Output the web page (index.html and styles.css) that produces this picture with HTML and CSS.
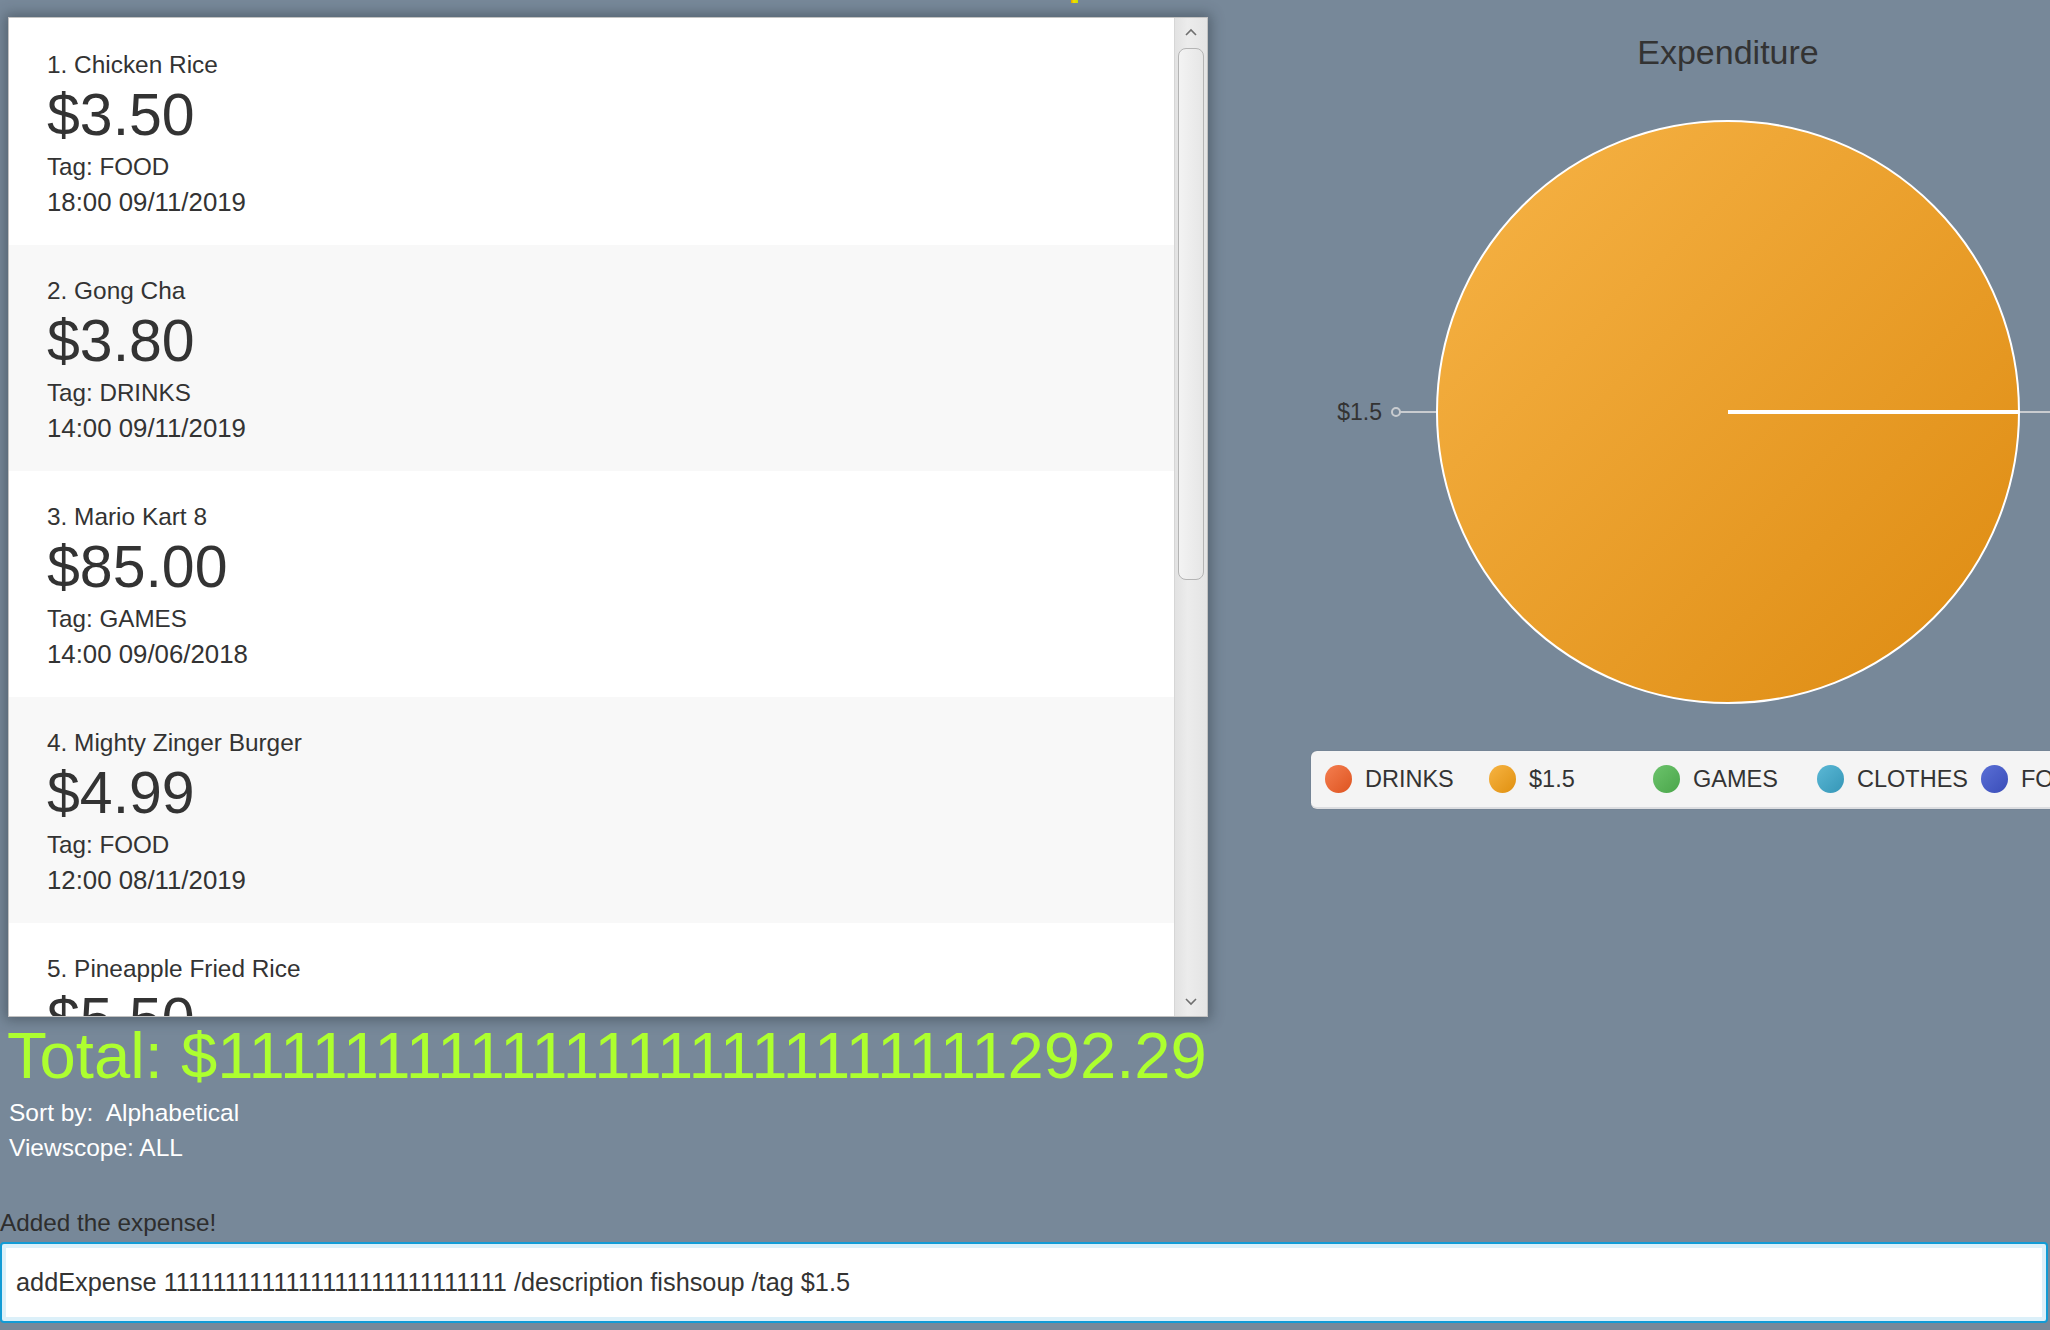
FILE: index.html
```html
<!DOCTYPE html>
<html lang="en">
<head>
<meta charset="utf-8">
<title>Expense Tracker</title>
<link rel="stylesheet" href="styles.css">
</head>
<body>
<div class="app">
  <div class="main">
    <div class="left">
      <div class="top-strip"><span class="cut-mark"></span></div>
      <div class="panel">
        <div class="list">
          <div class="card">
            <div class="c-title">1. Chicken Rice</div>
            <div class="c-amount">$3.50</div>
            <div class="c-tag">Tag: FOOD</div>
            <div class="c-date">18:00 09/11/2019</div>
          </div>
          <div class="card alt">
            <div class="c-title">2. Gong Cha</div>
            <div class="c-amount">$3.80</div>
            <div class="c-tag">Tag: DRINKS</div>
            <div class="c-date">14:00 09/11/2019</div>
          </div>
          <div class="card">
            <div class="c-title">3. Mario Kart 8</div>
            <div class="c-amount">$85.00</div>
            <div class="c-tag">Tag: GAMES</div>
            <div class="c-date">14:00 09/06/2018</div>
          </div>
          <div class="card alt">
            <div class="c-title">4. Mighty Zinger Burger</div>
            <div class="c-amount">$4.99</div>
            <div class="c-tag">Tag: FOOD</div>
            <div class="c-date">12:00 08/11/2019</div>
          </div>
          <div class="card">
            <div class="c-title">5. Pineapple Fried Rice</div>
            <div class="c-amount">$5.50</div>
          </div>
        </div>
        <div class="scrollbar">
          <div class="sb-btn">
            <svg width="12" height="8" viewBox="0 0 12 8"><polyline points="1,7 6,2 11,7" fill="none" stroke="#6f6f6f" stroke-width="1.6"/></svg>
          </div>
          <div class="sb-track"><div class="sb-thumb"></div></div>
          <div class="sb-btn">
            <svg width="12" height="8" viewBox="0 0 12 8"><polyline points="1,1 6,6 11,1" fill="none" stroke="#6f6f6f" stroke-width="1.6"/></svg>
          </div>
        </div>
      </div>
      <div class="total">Total: $1111111111111111111111111292.29</div>
      <div class="info">Sort by:&nbsp; Alphabetical</div>
      <div class="info">Viewscope: ALL</div>
    </div>
    <div class="right">
      <div class="chart-title">Expenditure</div>
      <svg class="pie" width="1030" height="640" viewBox="0 0 1030 640">
        <defs>
          <linearGradient id="pieGrad" x1="0" y1="0" x2="1" y2="1">
            <stop offset="0" stop-color="#f7b447"/>
            <stop offset="1" stop-color="#dd8a10"/>
          </linearGradient>
        </defs>
        <line x1="806" y1="332" x2="1030" y2="332" stroke="#c9ccd0" stroke-width="2"/>
        <line x1="187" y1="332" x2="224" y2="332" stroke="#c9ccd0" stroke-width="2"/>
        <circle cx="183" cy="332" r="4" fill="none" stroke="#c9ccd0" stroke-width="2"/>
        <text x="169" y="332" class="pie-label" text-anchor="end" dominant-baseline="central">$1.5</text>
        <circle cx="515" cy="332" r="291" fill="url(#pieGrad)" stroke="#ffffff" stroke-width="2"/>
        <line x1="515" y1="332" x2="806" y2="332" stroke="#ffffff" stroke-width="4"/>
      </svg>
      <div class="legend">
        <div class="lg-item"><span class="dot c0"></span><span class="lg-text">DRINKS</span></div>
        <div class="lg-item"><span class="dot c1"></span><span class="lg-text">$1.5</span></div>
        <div class="lg-item"><span class="dot c2"></span><span class="lg-text">GAMES</span></div>
        <div class="lg-item"><span class="dot c3"></span><span class="lg-text">CLOTHES</span></div>
        <div class="lg-item"><span class="dot c4"></span><span class="lg-text">FOOD</span></div>
      </div>
    </div>
  </div>
  <div class="result">Added the expense!</div>
  <div class="command">addExpense 1111111111111111111111111111 /description fishsoup /tag $1.5</div>
</div>
</body>
</html>
```
FILE: styles.css
```css
html, body {
  margin: 0;
  padding: 0;
}
body {
  background: #778899;
  font-family: "Liberation Sans", Arial, sans-serif;
  color: #333333;
}
.app {
  width: 2050px;
  height: 1330px;
  overflow: hidden;
  display: flex;
  flex-direction: column;
}
.main {
  display: flex;
  align-items: flex-start;
}
.left {
  width: 1213px;
  flex-shrink: 0;
}
.top-strip {
  height: 17px;
  display: flex;
  align-items: flex-start;
}
.cut-mark {
  display: block;
  width: 7px;
  height: 3px;
  margin-left: 1071px;
  background: linear-gradient(to right, #e8a000, #f2e200 40%, #c8e000);
}
.panel {
  margin-left: 8px;
  width: 1200px;
  height: 1000px;
  box-sizing: border-box;
  border: 1px solid #c2c2c2;
  background: #ffffff;
  display: flex;
  box-shadow: 0 0 12px 3px rgba(40, 50, 60, 0.45);
}
.list {
  flex: 1;
  overflow: hidden;
  padding-top: 1px;
}
.card {
  height: 226px;
  box-sizing: border-box;
  padding: 28px 0 0 38px;
  background: #ffffff;
  white-space: nowrap;
}
.card.alt {
  background: #f8f8f8;
}
.c-title {
  font-size: 24.4px;
  line-height: 35px;
}
.c-amount {
  font-size: 59px;
  line-height: 66px;
}
.c-tag {
  font-size: 24.2px;
  line-height: 38px;
}
.c-date {
  font-size: 25.8px;
  line-height: 32px;
}
.scrollbar {
  width: 33px;
  flex-shrink: 0;
  display: flex;
  flex-direction: column;
  box-sizing: border-box;
  border-left: 1px solid #d6d6d6;
  background: linear-gradient(to right, #e2e2e2, #ececec 40%, #e4e4e4);
}
.sb-btn {
  height: 28px;
  display: flex;
  align-items: center;
  justify-content: center;
}
.sb-track {
  flex: 1;
  padding: 2px 3px 0 3px;
}
.sb-thumb {
  height: 532px;
  box-sizing: border-box;
  border: 1.5px solid #b4b4b4;
  border-radius: 8px;
  background: linear-gradient(to right, #f3f3f3, #e6e6e6);
}
.total {
  font-size: 65.2px;
  line-height: 78px;
  color: #adff2f;
  padding-left: 7px;
  white-space: nowrap;
}
.info {
  font-size: 24.5px;
  line-height: 35px;
  color: #ffffff;
  padding-left: 9px;
}
.right {
  width: 1030px;
  flex-shrink: 0;
}
.chart-title {
  padding-top: 30px;
  font-size: 34px;
  line-height: 44px;
  text-align: center;
  color: #333333;
}
.pie {
  display: block;
  margin-top: 6px;
}
.pie-label {
  font-family: "Liberation Sans", Arial, sans-serif;
  font-size: 23px;
  fill: #333333;
}
.legend {
  width: 834px;
  height: 58px;
  box-sizing: border-box;
  margin: 31px auto 0 auto;
  padding-left: 14px;
  background: #f4f4f4;
  border-radius: 6px;
  border-bottom: 2px solid #dcdde0;
  box-shadow: 0 0 1px rgba(0, 0, 0, 0.25);
  display: grid;
  grid-template-columns: repeat(5, 164px);
  align-items: center;
}
.lg-item {
  display: flex;
  align-items: center;
  gap: 13px;
  white-space: nowrap;
}
.dot {
  width: 27px;
  height: 28px;
  border-radius: 50%;
  flex-shrink: 0;
}
.c0 { background: linear-gradient(135deg, #f47e50, #de5420); }
.c1 { background: linear-gradient(135deg, #f7b443, #e0900f); }
.c2 { background: linear-gradient(135deg, #6cc36c, #4aa64a); }
.c3 { background: linear-gradient(135deg, #5bb8d6, #3596b6); }
.c4 { background: linear-gradient(135deg, #5a6fd6, #3a4db8); }
.lg-text {
  font-size: 23.5px;
  color: #333333;
}
.result {
  margin-top: 40px;
  font-size: 24.3px;
  line-height: 35px;
  color: #2e2e2e;
}
.command {
  margin-top: 2px;
  width: 2048px;
  height: 81px;
  box-sizing: border-box;
  border: 2px solid #129bd5;
  border-radius: 4px;
  background: #ffffff;
  box-shadow: inset 0 0 0 4px #dcf0f9;
  padding-left: 14px;
  font-size: 25.3px;
  line-height: 77px;
  color: #333333;
  white-space: nowrap;
}
```
